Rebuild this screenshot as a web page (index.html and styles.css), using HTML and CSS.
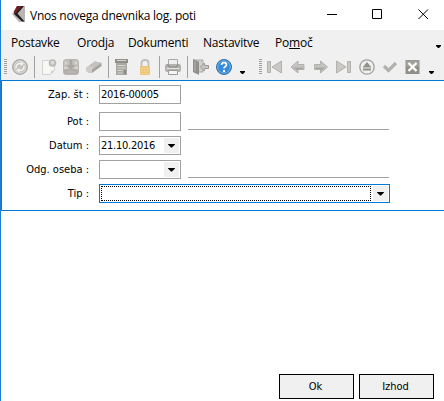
FILE: index.html
```
<!DOCTYPE html>
<html lang="sl">
<head>
    <meta charset="UTF-8">
    <meta name="viewport" content="width=device-width, initial-scale=1.0">
    <title>Vnos novega dnevnika log. poti</title>
    <link rel="stylesheet" href="styles.css">
</head>
<body>
<div class="window">
    <div class="titlebar">
        <svg class="logo" width="13" height="16" viewBox="0 0 13 16">
            <path d="M7 0h6v16H7L0 8z" fill="#b8b5b5"/>
            <path d="M5 0h7L5.500 7.500l7 8H10L2 8z" fill="#231b20"/>
            <path d="M5 0h5L3.500 7.500 1.500 6z" fill="#711f22"/>
        </svg>
        <span class="title">Vnos novega dnevnika log. poti</span>
        <svg class="controls" width="102" height="12" viewBox="0 0 102 12">
            <g fill="none" stroke="#000">
                <path d="M0 6.500h10M45.500 1.500h9v9h-9z"/>
                <path d="M91.500 1.500l9.500 9.500M101 1.500L91.500 11"/>
            </g>
        </svg>
    </div>

    <div class="menubar">
        <span class="m1">Postavke</span>
        <span class="m2">Orodja</span>
        <span class="m3">Dokumenti</span>
        <span class="m4">Nastavitve</span>
        <span class="m5">Po<u>m</u>oč</span>
        <i class="more"></i>
    </div>

    <div class="toolbar">
        <div class="tools">
            <i class="grip"></i>
            <svg class="icon refresh" viewBox="0 0 16 16">
                <circle cx="8" cy="8" r="7.300" fill="#d8d7d4" stroke="#a8a6a2" stroke-width="1.300"/>
                <circle cx="8" cy="8" r="5.300" fill="#c3c1bd"/>
                <path d="M4 9.500C3.500 6 6 4 9 4.500M12 6.500c.5 3.500-2 5.500-5 5" fill="none" stroke="#f3f3f1" stroke-width="1.500"/>
                <path d="M8.500 2.500l3.500 2.300L8.500 7zM7.500 13.500L4 11.200 7.500 9z" fill="#f3f3f1"/>
            </svg>
            <i class="sep s1"></i>
            <svg class="icon page" viewBox="0 0 16 16">
                <path d="M1.500 1.500h12v10l-4 4h-8z" fill="#f7f7f6" stroke="#d5d4d1"/>
                <path d="M9.500 15.500l.5-4 3.500 0z" fill="#d5d4d1"/>
                <circle cx="11.500" cy="4" r="3.800" fill="#bbb9b5"/>
                <circle cx="11.500" cy="3.800" r="2" fill="#dddcd9"/>
            </svg>
            <svg class="icon box" viewBox="0 0 16 16">
                <rect x=".5" y=".5" width="15" height="15" rx="2.500" fill="#c4c2be" stroke="#b7b5b0"/>
                <path d="M1 10h14v4q0 1-1 1H2q-1 0-1-1z" fill="#b3b0ab"/>
                <path d="M6.500 1h3v5h3L8 11 3.500 6h3z" fill="#aaa7a1"/>
                <path d="M1 9.500l3-1M15 9.500l-3-1M2 3l2 2M14 3l-2 2" stroke="#dddbd7" stroke-width="1.400"/>
                <path d="M4 13h8" stroke="#bdbab5"/>
            </svg>
            <svg class="icon eraser" viewBox="0 0 16 16">
                <path d="M0 9l9-6.500 6.500 1.500v3L6 14 1 13z" fill="#a5a29d"/>
                <path d="M0 9l9-6.500 6.500 1.500L6 10.500z" fill="#c5c3bf"/>
                <path d="M0 9l2.500-2 6 1.500L6 10.500V14l-5-1z" fill="#cfcdca"/>
            </svg>
            <i class="sep s2"></i>
            <svg class="icon calc" viewBox="0 0 16 16">
                <path d="M1 0h13v4H1z" fill="#918f89"/>
                <path d="M2 4h11v12H2z" fill="#aaa8a3"/>
                <path d="M3 1.500h9M3.500 6.500h8M3.500 9h8M3.500 11.500h5M3.500 14h5" stroke="#d5d4cf"/>
                <path d="M10 11h2v4h-2z" fill="#8b8983"/>
            </svg>
            <svg class="icon lock" viewBox="0 0 16 16">
                <path d="M4.500 8V4Q4.500 1 8 1t3.500 3v4" fill="none" stroke="#c0beba" stroke-width="1.800"/>
                <rect x="3" y="7" width="10" height="9" rx="1" fill="#eec477"/>
                <path d="M3.500 9.500h9M3.500 12h9M3.500 14.500h9" stroke="#f3d496"/>
            </svg>
            <i class="sep s3"></i>
            <svg class="icon printer" viewBox="0 0 16 16">
                <path d="M3.500.5h9V7h-9z" fill="#eee" stroke="#aaa8a3"/>
                <path d="M2 5h12q2 0 2 2v4q0 2-2 2H2q-2 0-2-2V7q0-2 2-2z" fill="#b3b1ad"/>
                <path d="M2 6h2v2h8V6h2" fill="none" stroke="#8e8c88"/>
                <path d="M1.500 9.500h13" stroke="#e3e2df"/>
                <path d="M3.500 11.500h9v4h-9z" fill="#f5f5f4" stroke="#9d9b96"/>
            </svg>
            <i class="sep s4"></i>
            <svg class="icon door" viewBox="0 0 16 16">
                <path d="M1 1h9v12H1z" fill="#d1cfcc" stroke="#aaa8a3"/>
                <path d="M0 0l6 3v13l-6-3z" fill="#918f8a"/>
                <path d="M1.500 2l1 .5v10l-1-.5z" fill="#b7b5b0"/>
                <path d="M7.500 8l4-4v2.500h4v3h-4V12z" fill="#c8c6c2" stroke="#9b9994"/>
            </svg>
            <svg class="icon help" viewBox="0 0 16 16">
                <circle cx="8" cy="8" r="7.500" fill="#2870bd" stroke="#3c6d9f"/>
                <circle cx="8" cy="8" r="6.300" fill="#348bdd" stroke="#7dbcee"/>
                <path d="M5.500 6Q5.500 3.700 8 3.700t2.500 2.100C10.500 7.500 8 7.500 8 9.500" fill="none" stroke="#fff" stroke-width="1.700"/>
                <path d="M7 11h2v2H7z" fill="#fff"/>
            </svg>
            <i class="more"></i>
        </div>
        <div class="tools nav">
            <i class="grip"></i>
            <svg class="icon first" viewBox="0 0 16 16">
                <path d="M.5 2.500h3v11h-3zM14.500 2v12L5 8z" fill="#c9c8c5" stroke="#b3b1ad"/>
            </svg>
            <svg class="icon prev" viewBox="0 0 16 16">
                <path d="M1 8l7-6v3.500h6v5H8V14z" fill="#c5c4c0" stroke="#b3b1ad"/>
                <path d="M3 8.500h10V10H8v2z" fill="#a6a49f"/>
            </svg>
            <svg class="icon next" viewBox="0 0 16 16">
                <path d="M14.500 8l-7-6v3.500h-6v5h6V14z" fill="#c5c4c0" stroke="#b3b1ad"/>
                <path d="M12.500 8.500h-10V10h5v2z" fill="#a6a49f"/>
            </svg>
            <svg class="icon last" viewBox="0 0 16 16">
                <path d="M.5 2v12L10 8zM11.500 2.500h3v11h-3z" fill="#c9c8c5" stroke="#b3b1ad"/>
            </svg>
            <svg class="icon eject" viewBox="0 0 16 16">
                <circle cx="8" cy="8" r="7.200" fill="#efefee" stroke="#a19f9b" stroke-width="1.300"/>
                <path d="M8 3l4.500 5.500h-9zM4 9.500h8v2H4z" fill="#92908b"/>
            </svg>
            <svg class="icon check" viewBox="0 0 16 16">
                <path d="M2 7l4.500 4.500L14 4" fill="none" stroke="#b3b1ad" stroke-width="3.200"/>
            </svg>
            <svg class="icon cancel" viewBox="0 0 16 16">
                <path d="M.5 1h14v14H.5z" fill="#918f88"/>
                <path d="M1 1.500h13v6H1z" fill="#a3a19b"/>
                <path d="M3.500 4l8 8M11.500 4l-8 8" stroke="#fff" stroke-width="2.400"/>
            </svg>
            <i class="more"></i>
        </div>
    </div>

    <div class="panel">
        <div class="row first-row">
            <label>Zap. št :</label>
            <div class="field">2016-00005</div>
        </div>
        <div class="row">
            <label>Pot :</label>
            <div class="field"></div>
            <div class="line"></div>
        </div>
        <div class="row">
            <label>Datum :</label>
            <div class="field date">21.10.2016<span class="drop"></span></div>
        </div>
        <div class="row">
            <label>Odg. oseba :</label>
            <div class="field"><span class="drop"></span></div>
            <div class="line"></div>
        </div>
        <div class="row">
            <label>Tip :</label>
            <div class="field wide"><span class="focus"></span><span class="drop"></span></div>
        </div>
    </div>

    <div class="footer">
        <button class="btn">Ok</button>
        <button class="btn">Izhod</button>
    </div>
</div>
</body>
</html>
```
FILE: styles.css
```
* {
    box-sizing: border-box;
}
body {
    margin: 0;
    background: #fff;
    color: #000;
    font-family: "DejaVu Sans Condensed", "DejaVu Sans", sans-serif;
    font-size: 11px;
}
.window {
    display: flex;
    flex-direction: column;
    width: 444px;
    height: 401px;
    border-left: 1px solid #1c7fd6;
    overflow: hidden;
}
.titlebar {
    display: flex;
    align-items: center;
    height: 30px;
    padding-left: 11px;
    font-family: "Open Sans", "Noto Sans", sans-serif;
    font-size: 12px;
}
.logo {
    margin-bottom: 2px;
}
.title {
    margin-left: 5px;
    width: 170px;
    white-space: nowrap;
    letter-spacing: -0.24px;
}
.controls {
    margin: 0 0 2px 127px;
}
.menubar {
    display: flex;
    height: 26px;
    padding: 0 3px 0 10px;
    background: #f0f0f0;
    font-family: "Open Sans", "Noto Sans", sans-serif;
    font-size: 12px;
    line-height: 26px;
    letter-spacing: -0.2px;
    white-space: nowrap;
}
.m1 {
    width: 66px;
}
.m2 {
    width: 51px;
}
.m3 {
    width: 75px;
}
.m4 {
    width: 72px;
}
.more {
    width: 5px;
    height: 3px;
    background: #000;
    clip-path: polygon(0 0, 100% 0, 100% 34%, 60% 100%, 40% 100%, 0 34%);
}
.menubar .more {
    margin: 15px 0 0 auto;
}
.toolbar {
    display: flex;
    height: 24px;
    background: #f0f0f0;
}
.tools {
    display: flex;
    align-items: center;
    width: 254px;
    padding: 0 10px 2px 3px;
}
.nav {
    width: 189px;
    padding-left: 4px;
}
.grip {
    width: 3px;
    height: 16px;
    background: repeating-linear-gradient(#a0a0a0 0 1px, #f0f0f0 1px 2px);
}
.icon {
    width: 16px;
    height: 16px;
    flex: none;
}
.sep {
    width: 1px;
    height: 22px;
    background: #a0a0a0;
}
.tools .more {
    margin: 11px 0 0 auto;
}
.refresh {
    margin-left: 5px;
}
.s1 {
    margin-left: 6px;
}
.page {
    margin-left: 6px;
}
.box {
    margin-left: 6px;
}
.eraser {
    margin-left: 7px;
}
.s2 {
    margin-left: 6px;
}
.calc {
    margin-left: 5px;
}
.lock {
    margin-left: 7px;
}
.s3 {
    margin-left: 6px;
}
.printer {
    margin-left: 5px;
}
.s4 {
    margin-left: 6px;
}
.door {
    margin-left: 5px;
}
.help {
    margin-left: 7px;
}
.first {
    margin-left: 5px;
}
.prev, .next, .last, .eject, .check, .cancel {
    margin-left: 7px;
}
.panel {
    height: 131px;
    padding-top: 4px;
    border: 1px solid #0078d7;
    border-right: 0;
}
.row {
    display: flex;
    height: 19px;
    margin-bottom: 5px;
    line-height: 20px;
}
.first-row {
    margin-bottom: 8px;
}
.row label {
    width: 87px;
    margin-right: 10px;
    text-align: right;
    white-space: nowrap;
}
.field {
    display: flex;
    justify-content: flex-end;
    width: 82px;
    height: 19px;
    padding: 1px;
    border: 1px solid #a0a0a0;
    line-height: 15px;
}
.first-row .field, .date {
    justify-content: flex-start;
    letter-spacing: -0.25px;
}
.date .drop {
    margin-left: auto;
}
.drop {
    display: flex;
    align-items: center;
    justify-content: center;
    width: 15px;
    height: 15px;
    background: #f0f0f0;
}
.drop::before {
    content: "";
    width: 7px;
    height: 4px;
    background: #000;
    clip-path: polygon(0 0, 100% 0, 100% 25%, 57% 100%, 43% 100%, 0 25%);
}
.line {
    width: 201px;
    height: 18px;
    margin-left: 7px;
    border-bottom: 1px solid #a0a0a0;
}
.wide {
    width: 291px;
    border-color: #0078d7;
}
.focus {
    flex: 1;
    margin-right: 2px;
    border: 1px dotted #000;
}
.footer {
    display: flex;
    justify-content: flex-end;
    gap: 5px;
    margin-top: 163px;
    padding-right: 10px;
}
.btn {
    width: 75px;
    height: 25px;
    padding: 0 2px 1px 0;
    border: 1px solid #000;
    border-radius: 0;
    background: #f0f0f0;
    color: #000;
    font: inherit;
}
```
